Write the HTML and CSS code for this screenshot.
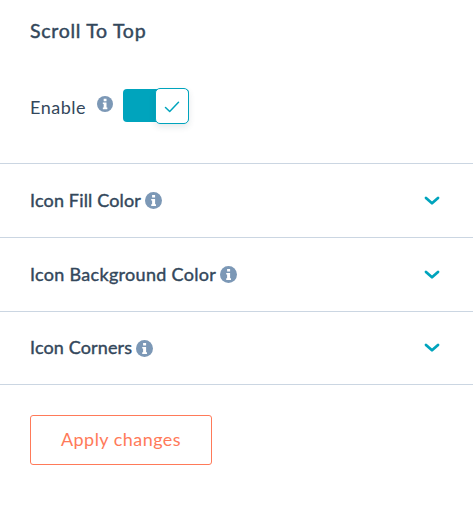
FILE: index.html
```html
<!DOCTYPE html>
<html lang="en">
<head>
<meta charset="utf-8">
<title>Scroll To Top</title>
<link rel="stylesheet" href="styles.css">
</head>
<body>
<svg class="defs" width="0" height="0">
  <symbol id="info" viewBox="0 0 17 17"><circle cx="8.5" cy="8.5" r="8.5" fill="#7c98b6"/><path d="M7.1 3h3v2.6h-3zM6.2 7h3.9v5.2h.9V14H6.2v-1.8h.9V8.6h-.9z" fill="#fff"/></symbol>
  <symbol id="chevron" viewBox="0 0 16 10"><path d="M2 2l6 5.2L14 2" fill="none" stroke="#00a4bd" stroke-width="2.8" stroke-linecap="round" stroke-linejoin="round"/></symbol>
</svg>
<main class="panel">
  <section class="intro">
    <h1 class="title">Scroll To Top</h1>
    <div class="enable">
      <span class="enable-label">Enable</span>
      <svg class="info-small"><use href="#info"/></svg>
      <div class="toggle"><div class="knob"><svg width="16" height="12" viewBox="0 0 16 12"><path d="M1.5 6.5l4.2 4L14.5 1.3" fill="none" stroke="#00a4bd" stroke-width="1.5" stroke-linecap="round" stroke-linejoin="round"/></svg></div></div>
    </div>
  </section>
  <section class="row"><span class="label fill">Icon Fill Color</span><svg class="info"><use href="#info"/></svg><svg class="chevron"><use href="#chevron"/></svg></section>
  <section class="row"><span class="label background">Icon Background Color</span><svg class="info"><use href="#info"/></svg><svg class="chevron"><use href="#chevron"/></svg></section>
  <section class="row last"><span class="label corners">Icon Corners</span><svg class="info"><use href="#info"/></svg><svg class="chevron"><use href="#chevron"/></svg></section>
  <button class="apply">Apply changes</button>
</main>
</body>
</html>
```
FILE: styles.css
```css
* { box-sizing: border-box; }
body { margin: 0; background: #fff; color: #33475b; font: 18px/24px Lato, "Liberation Sans", sans-serif; }
.defs { position: absolute; }
.panel { width: 473px; }
.intro { height: 164px; padding: 19px 30px 0; border-bottom: 1px solid #cbd6e2; }
.title { margin: 0; font-size: 19.5px; line-height: 24px; font-weight: 400; -webkit-text-stroke: .45px #33475b; letter-spacing: .72px; }
.enable { display: flex; align-items: flex-start; margin-top: 44px; height: 40px; }
.enable-label { width: 67px; padding-top: 8px; letter-spacing: .5px; white-space: nowrap; }
.info-small { width: 16px; height: 16px; margin-top: 9px; }
.toggle { display: flex; justify-content: flex-end; align-items: center; width: 66px; height: 33px; margin: 2px 0 0 10px; background: #00a4bd; border-radius: 4px; }
.knob { display: flex; align-items: center; justify-content: center; width: 34px; height: 36px; flex: none; border: 1.5px solid #00a4bd; border-radius: 5px; background: #fff; box-shadow: 0 3px 6px rgba(45,62,80,.12); padding-top: 2px; }
.row { display: flex; align-items: center; height: 74px; padding: 0 33px 0 30px; border-bottom: 1px solid #cbd6e2; }
.last { height: 73px; }
.label { padding-bottom: 2px; white-space: nowrap; -webkit-text-stroke: .4px #33475b; }
.fill { width: 115px; letter-spacing: .16px; }
.background { width: 190px; letter-spacing: .3px; }
.corners { width: 106px; letter-spacing: .14px; }
.info { width: 17px; height: 17px; flex: none; }
.chevron { width: 16px; height: 10px; margin-left: auto; }
.apply { display: block; width: 182px; height: 50px; margin: 30px 0 0 30px; padding: 0 0 2px; background: #fff; border: 1px solid #ff7a59; border-radius: 3px; color: #ff7a59; font: inherit; letter-spacing: .46px; white-space: nowrap; }
```
